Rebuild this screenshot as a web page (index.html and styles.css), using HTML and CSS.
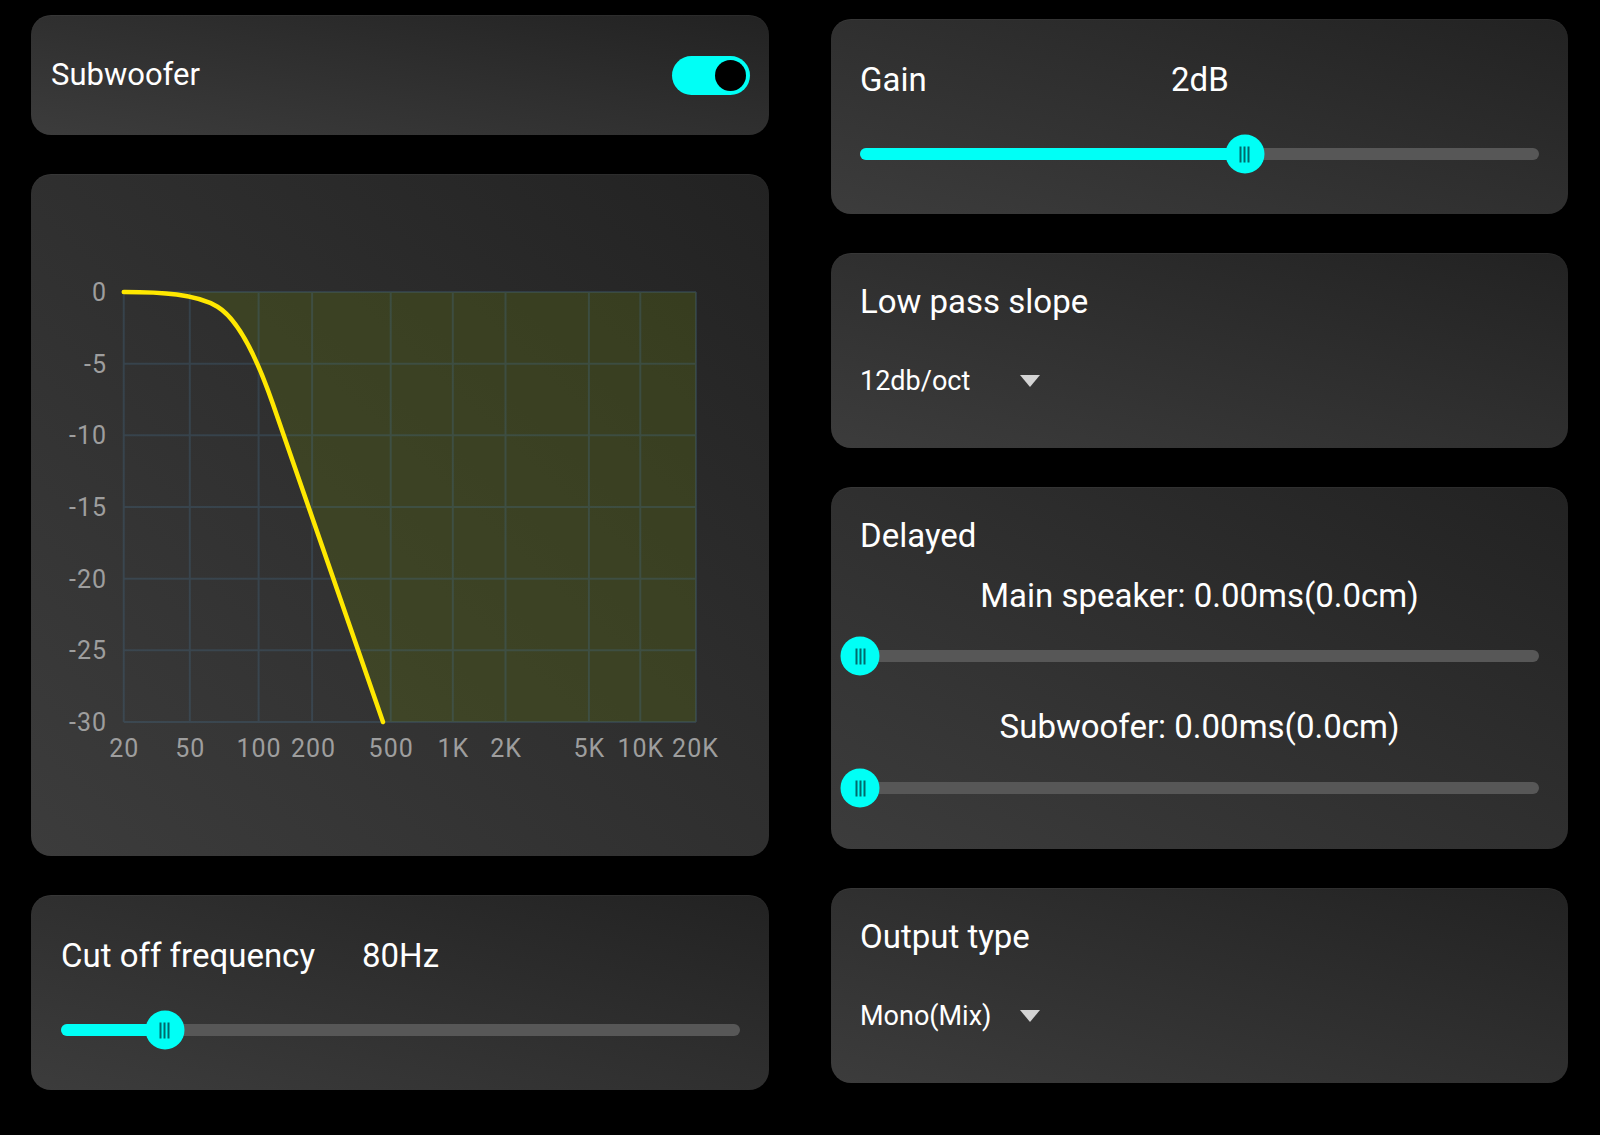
FILE: index.html
```html
<!DOCTYPE html>
<html>
<head>
    <title>Subwoofer Settings</title>
    <link rel="stylesheet" href="styles.css">
</head>
<body>
    <div class="page">
        <div class="column">
            <section class="card card-switch">
                <span class="title">Subwoofer</span>
                <span class="toggle"><span class="knob"></span></span>
            </section>

            <section class="card card-chart">
                <svg class="chart" width="738" height="682" viewBox="0 0 738 682">
                    <!-- 12dB/oct low pass response -->
                    <path class="area" d="M92.75,118 C130,118 165,119.8 186.5,132.7 C204.8,143.8 223.3,176.2 241.9,230 L352,548 L665,548 L665,118 Z"/>
                    <path class="grid" d="M92.75,118 V548 M158.8,118 V548 M227.6,118 V548 M281.1,118 V548 M359.7,118 V548 M421.8,118 V548 M474.5,118 V548 M557.9,118 V548 M609.3,118 V548 M665,118 V548
                        M92.75,118 H665 M92.75,189.7 H665 M92.75,261.3 H665 M92.75,333 H665 M92.75,404.7 H665 M92.75,476.3 H665 M92.75,548 H665"/>
                    <path class="curve" d="M92.75,118 C130,118 165,119.8 186.5,132.7 C204.8,143.8 223.3,176.2 241.9,230 L352,548"/>
                    <g class="y-labels">
                        <text x="76" y="127">0</text>
                        <text x="76" y="198.7">-5</text>
                        <text x="76" y="270.3">-10</text>
                        <text x="76" y="342">-15</text>
                        <text x="76" y="413.7">-20</text>
                        <text x="76" y="485.3">-25</text>
                        <text x="76" y="557">-30</text>
                    </g>
                    <g class="x-labels">
                        <text x="93.25" y="583">20</text>
                        <text x="159.3" y="583">50</text>
                        <text x="228.1" y="583">100</text>
                        <text x="282.6" y="583">200</text>
                        <text x="360.2" y="583">500</text>
                        <text x="422.3" y="583">1K</text>
                        <text x="475" y="583">2K</text>
                        <text x="558.4" y="583">5K</text>
                        <text x="609.8" y="583">10K</text>
                        <text x="664.5" y="583">20K</text>
                    </g>
                </svg>
            </section>

            <section class="card card-slider card-left">
                <div class="slider-head">
                    <span class="title title-cutoff">Cut off frequency</span>
                    <span class="title">80Hz</span>
                </div>
                <div class="slider">
                    <div class="track">
                        <div class="fill" style="width: 15.3%"></div>
                        <div class="thumb" style="left: 15.3%"><i></i><i></i><i></i></div>
                    </div>
                </div>
            </section>
        </div>

        <div class="column column-right">
            <section class="card card-slider">
                <div class="slider-head">
                    <span class="title title-gain">Gain</span>
                    <span class="title">2dB</span>
                </div>
                <div class="slider">
                    <div class="track">
                        <div class="fill" style="width: 56.7%"></div>
                        <div class="thumb" style="left: 56.7%"><i></i><i></i><i></i></div>
                    </div>
                </div>
            </section>

            <section class="card card-select">
                <div class="title">Low pass slope</div>
                <div class="dropdown">
                    <span class="dropdown-text">12db/oct</span>
                    <span class="arrow"></span>
                </div>
            </section>

            <section class="card card-delay">
                <div class="title">Delayed</div>
                <div class="delay-label">Main speaker: 0.00ms(0.0cm)</div>
                <div class="slider slider-delay">
                    <div class="track">
                        <div class="fill" style="width: 0%"></div>
                        <div class="thumb" style="left: 0%"><i></i><i></i><i></i></div>
                    </div>
                </div>
                <div class="delay-label delay-label-second">Subwoofer: 0.00ms(0.0cm)</div>
                <div class="slider slider-delay slider-last">
                    <div class="track">
                        <div class="fill" style="width: 0%"></div>
                        <div class="thumb" style="left: 0%"><i></i><i></i><i></i></div>
                    </div>
                </div>
            </section>

            <section class="card card-select">
                <div class="title">Output type</div>
                <div class="dropdown">
                    <span class="dropdown-text">Mono(Mix)</span>
                    <span class="arrow"></span>
                </div>
            </section>
        </div>
    </div>
</body>
</html>
```

FILE: styles.css
```css
body {
    margin: 0;
    background-color: #000;
    font-family: Roboto, "Liberation Sans", Arial, sans-serif;
    color: #fff;
}
.page {
    display: grid;
    grid-template-columns: 738px 737px;
    column-gap: 62px;
    padding: 15px 32px 0 31px;
}
.column {
    display: flex;
    flex-direction: column;
    gap: 39px;
}
.column-right {
    padding-top: 4px;
}
.card {
    box-sizing: border-box;
    border-radius: 20px;
    background: linear-gradient(to top right, #3c3c3c 0%, #2e2e2e 55%, #222 100%);
    box-shadow: inset 0 1px 0 rgba(255, 255, 255, 0.04);
}
.title {
    font-size: 33px;
    line-height: 36px;
}

/* subwoofer switch */
.card-switch {
    height: 120px;
    display: flex;
    align-items: center;
    justify-content: space-between;
    padding: 0 19px 0 20px;
}
.card-switch .title {
    font-size: 31px;
}
.toggle {
    width: 78px;
    height: 39px;
    border-radius: 20px;
    background-color: #00fff6;
    display: flex;
    align-items: center;
    justify-content: flex-end;
    padding-right: 4px;
    box-sizing: border-box;
}
.knob {
    width: 31px;
    height: 31px;
    border-radius: 50%;
    background-color: #000;
}

/* chart */
.card-chart {
    height: 682px;
}
.chart {
    display: block;
}
.area {
    fill: rgba(78, 92, 24, 0.45);
}
.grid {
    fill: none;
    stroke: rgba(70, 110, 140, 0.3);
    stroke-width: 2;
}
.curve {
    fill: none;
    stroke: #ffe800;
    stroke-width: 4.5;
    stroke-linejoin: round;
    stroke-linecap: round;
}
.chart text {
    font-family: Roboto, "Liberation Sans", Arial, sans-serif;
    font-size: 25px;
    letter-spacing: 1px;
    fill: #9e9e9e;
}
.y-labels text {
    text-anchor: end;
}
.x-labels text {
    text-anchor: middle;
}

/* sliders */
.card-slider {
    height: 195px;
    padding: 43px 29px 0 29px;
}
.card-left {
    padding-left: 30px;
}
.slider-head {
    display: flex;
}
.title-gain {
    width: 311px;
}
.title-cutoff {
    width: 301px;
}
.slider {
    height: 40px;
    margin-top: 36px;
    display: flex;
    align-items: center;
}
.track {
    position: relative;
    width: 100%;
    height: 12px;
    border-radius: 6px;
    background-color: #575757;
}
.fill {
    height: 100%;
    border-radius: 6px;
    background-color: #00fff6;
}
.thumb {
    position: absolute;
    top: 50%;
    width: 39px;
    height: 39px;
    border-radius: 50%;
    background-color: #00fff6;
    transform: translate(-50%, -50%);
    display: flex;
    justify-content: center;
    align-items: center;
    gap: 2px;
}
.thumb i {
    width: 2px;
    height: 16px;
    background-color: #00696b;
}

/* dropdown cards */
.card-select {
    height: 195px;
    padding: 31px 29px 0 29px;
}
.dropdown {
    display: flex;
    align-items: center;
    margin-top: 45px;
    font-size: 27px;
    line-height: 32px;
}
.dropdown-text {
    width: 160px;
}
.arrow {
    width: 0;
    height: 0;
    border-left: 10px solid transparent;
    border-right: 10px solid transparent;
    border-top: 12px solid #d4d4d4;
}

/* delay card */
.card-delay {
    height: 362px;
    padding: 31px 29px 0 29px;
}
.delay-label {
    font-size: 33px;
    line-height: 38px;
    text-align: center;
    margin-top: 23px;
}
.delay-label-second {
    margin-top: 32px;
}
.slider-delay {
    margin-top: 21px;
}
.slider-last {
    margin-top: 22px;
}
```
